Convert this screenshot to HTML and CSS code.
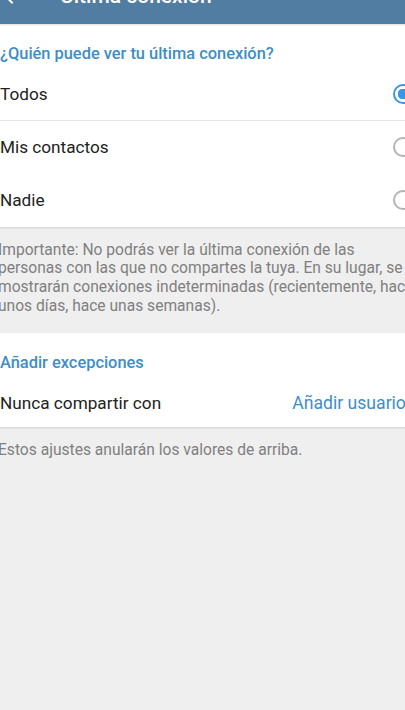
FILE: index.html
```html
<!DOCTYPE html>
<html lang="es">
<head>
  <meta charset="UTF-8" />
  <title>Última conexión</title>
  <link rel="stylesheet" href="styles.css">
</head>
<body>
  <div class="screen">

    <div class="appbar">
      <svg class="back" width="24" height="24" viewBox="0 0 24 24">
        <path d="M20 11H7.8l5.6-5.6L12 4l-8 8 8 8 1.4-1.4L7.8 13H20z" fill="#fff"/>
      </svg>
      <span class="appbar-title">Última conexión</span>
    </div>

    <div class="section">
      <div class="section-title">¿Quién puede ver tu última conexión?</div>
      <div class="row divided">
        <span>Todos</span>
        <span class="radio checked"></span>
      </div>
      <div class="row">
        <span>Mis contactos</span>
        <span class="radio"></span>
      </div>
      <div class="row">
        <span>Nadie</span>
        <span class="radio"></span>
      </div>
    </div>

    <p class="info">Importante: No podrás ver la última conexión de las personas con las que no compartes la tuya. En su lugar, se mostrarán conexiones indeterminadas (recientemente, hace unos días, hace unas semanas).</p>

    <div class="section">
      <div class="section-title second">Añadir excepciones</div>
      <div class="row short">
        <span>Nunca compartir con</span>
        <span class="link">Añadir usuarios</span>
      </div>
    </div>

    <p class="info footer">Estos ajustes anularán los valores de arriba.</p>

  </div>
</body>
</html>
```

FILE: styles.css
```css
body {
  margin: 0;
  background-color: #efefef;
  font-family: Roboto, "Noto Sans", sans-serif;
  overflow: hidden;
}

/* the shot is a crop of a wider phone screen */
.screen {
  width: 445px;
  margin: -32px 0 0 -16px;
}

.appbar {
  height: 56px;
  background-color: #527da3;
  display: flex;
  align-items: center;
  padding-left: 16px;
  box-shadow: 0 1px 2px rgba(0, 0, 0, 0.15);
  position: relative;
}
.back { margin-right: 36px; }
.appbar-title {
  color: white;
  font-size: 21px;
  font-weight: 500;
}

.section {
  background-color: white;
  box-shadow: 0 1px 2px rgba(0, 0, 0, 0.12);
}
.section-title {
  color: #3d8ec7;
  font-size: 16.4px;
  font-weight: 500;
  line-height: 20px;
  padding: 20px 16px 3.5px;
}
.section-title.second { padding-bottom: 6px; }

.row {
  height: 53px;
  display: flex;
  align-items: center;
  justify-content: space-between;
  padding: 0 16px 0 16px;
  font-size: 17.2px;
  color: #222;
}
.row.divided { box-shadow: inset 0 -1px 0 #e6e6e6; }
.row.short { height: 48px; padding-right: 14px; }

.radio {
  width: 16px;
  height: 16px;
  border: 2px solid #b4b4b4;
  border-radius: 50%;
}
.radio.checked {
  border-color: #3b97e3;
  background: radial-gradient(circle, #3b97e3 0 5px, white 5.5px);
}

.link { color: #3d8ec7; font-size: 17.6px; }

.info {
  margin: 0;
  padding: 14px 10px 17.5px 14px;
  font-size: 15.6px;
  line-height: 18.7px;
  color: #808080;
}
.info.footer { padding-top: 14.5px; }
```
